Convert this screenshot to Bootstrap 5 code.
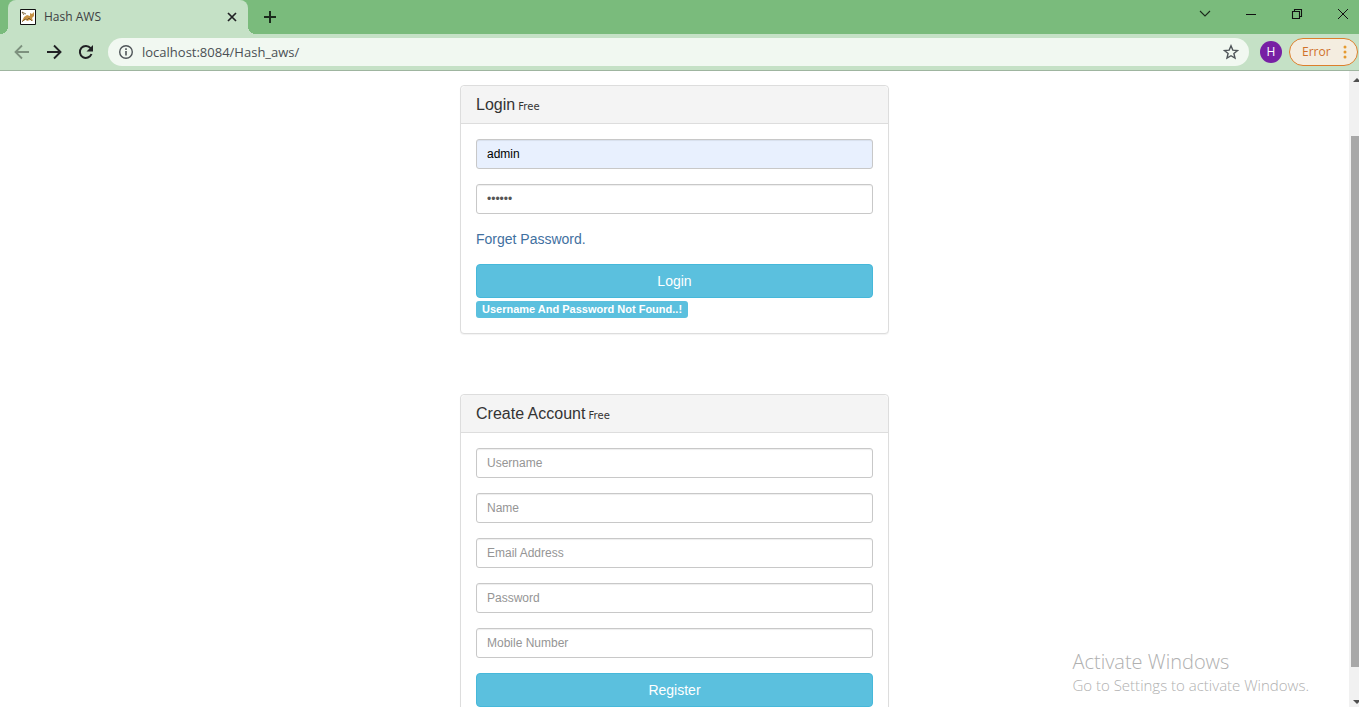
<!DOCTYPE html>
<html lang="en">
<head>
<meta charset="utf-8">
<meta name="viewport" content="width=device-width, initial-scale=1">
<title>Hash AWS</title>
<link href="https://cdn.jsdelivr.net/npm/bootstrap@5.3.0/dist/css/bootstrap.min.css" rel="stylesheet">
<style>
:root { --ui: "Open Sans", "Noto Sans", sans-serif; }
body { font-family: "Liberation Sans", Arial, sans-serif; font-size: 14px; line-height: 20px; color: #333; background: #fff; }
svg { display: block; flex: none; }
button { color: inherit; }
.plain { border: 0; background: none; padding: 0; }
.chrome { font-family: var(--ui); color: #202124; }
.tabstrip { background: #7abb7c; height: 34px; padding-left: 8px; }
.browser-tab { background: #c5e1c6; width: 240px; height: 34px; border-radius: 8px 8px 0 0; padding: 0 10px 0 12px; font-size: 12px; color: #3c4043; position: relative; }
.browser-tab::before, .browser-tab::after { content: ""; position: absolute; bottom: 0; width: 8px; height: 8px; }
.browser-tab::before { left: -8px; background: radial-gradient(circle at 0 0, transparent 8px, #c5e1c6 8px); }
.browser-tab::after { right: -8px; background: radial-gradient(circle at 100% 0, transparent 8px, #c5e1c6 8px); }
.win-controls { gap: 30px; padding-right: 8px; height: 28px; }
.toolbar { background: #c5e1c6; height: 37px; border-bottom: 1px solid #9fb5a0; padding: 0 1px 0 14px; }
.address { background: #f1f8f1; height: 28px; border-radius: 14px; padding: 0 10px; margin: 0 11px 0 14px; }
.address input { font-size: 13px; color: #4a4f54; outline: 0; line-height: 20px; }
.avatar { width: 22px; height: 22px; background: #7720a4; color: #fff; font-size: 12px; }
.error-pill { height: 28px; width: 69px; border: 1px solid #dc7f2b; border-radius: 14px; background: #f4ede0; color: #d0712a; font-size: 12px; margin-left: 7px; padding: 0 10px 0 12px; }
.page-view { min-height: 0; }
.page-content { padding-top: 14px; }
.form-column { max-width: 429px; gap: 60px; }
.panel-box { border: 1px solid #ddd; border-radius: 4px; box-shadow: 0 1px 1px rgba(0,0,0,.05); }
.panel-box .card-header { background: #f4f4f4; border-color: #ddd; padding: 10px 15px; height: 38px; }
.panel-box h1 { font-size: 16px; line-height: 18px; font-weight: 400; }
.panel-box h1 small { font-family: "DejaVu Sans", Verdana, sans-serif; font-size: 10px; }
.panel-box .card-body { padding: 15px; }
.field { height: 30px; padding: 5px 10px; font-size: 12px; line-height: 18px; border: 1px solid #c8c8c8; border-radius: 3px; box-shadow: inset 0 1px 1px rgba(0,0,0,.07); color: #555; margin-bottom: 15px; }
.field::placeholder { color: #959595; }
.autofilled { background: #e8f0fe; color: #000; }
.forgot { color: #41709f; margin-bottom: 15px; }
.btn-sky { --bs-btn-color: #fff; --bs-btn-bg: #5bc0de; --bs-btn-border-color: #46b8da; --bs-btn-hover-color: #fff; --bs-btn-hover-bg: #31b0d5; --bs-btn-hover-border-color: #269abc; font-size: 14px; line-height: 20px; padding: 6px 12px; border-radius: 4px; }
.notice { background: #5bc0de; font-size: 11px; line-height: 11px; padding: 3px 6px; border-radius: 3px; margin-top: 3px; }
.scroll-rail { width: 10px; background: #f1f1f1; padding: 5px 0 1px; }
.scroll-thumb { flex: 531 0 0; background: #a8a8a8; margin: 53px 0 0 2px; }
.scroll-gap { flex: 32 0 0; }
.watermark { right: 50px; bottom: 12px; color: #b0b0b0; font-family: var(--ui); font-weight: 300; pointer-events: none; }
.watermark strong { font-size: 20px; line-height: 26px; font-weight: 300; }
.watermark span { font-size: 15px; line-height: 20px; }
</style>
</head>
<body class="vh-100 overflow-hidden d-flex flex-column">
<header class="chrome flex-shrink-0">
  <div class="tabstrip d-flex">
    <div class="browser-tab d-flex align-items-center">
      <svg width="16" height="16" viewBox="0 0 16 16"><path fill="#fff" stroke="#111" d="M.5.5h15v15H.5z"/><path fill="#c69245" d="M2 12l2-4 3-2 3 1V4l2 1 2-2v4l-2 2 1 3-3-1-3 1-1-2-2 2z"/><path fill="none" stroke="#6f5427" stroke-width=".8" d="M2 13l3-3 2 1 2-2 3 3M4 6l-2-3 4 2"/></svg>
      <span class="ms-2">Hash AWS</span>
      <button class="plain ms-auto" aria-label="Close tab"><svg width="12" height="12" viewBox="0 0 12 12"><path d="M2 2l8 8M10 2l-8 8" stroke="#202124" stroke-width="1.7"/></svg></button>
    </div>
    <button class="plain ms-3" aria-label="New tab"><svg width="12" height="12" viewBox="0 0 12 12"><path d="M6 0v12M0 6h12" stroke="#1b2a1c" stroke-width="2"/></svg></button>
    <div class="win-controls d-flex align-items-center ms-auto">
      <button class="plain" aria-label="Search tabs"><svg width="16" height="12" viewBox="0 0 16 12"><path d="M3 3l5 5 5-5" fill="none" stroke="#1b2a1c" stroke-width="1.1"/></svg></button>
      <button class="plain" aria-label="Minimize"><svg width="16" height="12" viewBox="0 0 16 12"><path d="M3 6.5h10" stroke="#111"/></svg></button>
      <button class="plain" aria-label="Restore"><svg width="16" height="12" viewBox="0 0 16 12"><path d="M3.500 3.500h7v7h-7zM5.500 3v-1.500h7v7H11" fill="none" stroke="#111" stroke-width="1.1"/></svg></button>
      <button class="plain" aria-label="Close"><svg width="16" height="12" viewBox="0 0 16 12"><path d="M3 1l10 10M13 1L3 11" stroke="#111"/></svg></button>
    </div>
  </div>
  <div class="toolbar d-flex align-items-center">
    <div class="d-flex gap-3">
      <button class="plain" aria-label="Back"><svg width="16" height="16" viewBox="0 0 16 16"><path d="M15 8H2M8 1.500L1.500 8 8 14.500" fill="none" stroke="#7d917e" stroke-width="1.800"/></svg></button>
      <button class="plain" aria-label="Forward"><svg width="16" height="16" viewBox="0 0 16 16"><path d="M1 8h13M8 1.500L14.500 8 8 14.500" fill="none" stroke="#202124" stroke-width="1.900"/></svg></button>
      <button class="plain" aria-label="Reload"><svg width="16" height="16" viewBox="0 0 16 16"><path d="M13.500 10A6 6 0 1 1 12.600 4.200" fill="none" stroke="#202124" stroke-width="2"/><path d="M15 1v6.500H8.500z" fill="#202124"/></svg></button>
    </div>
    <div class="address d-flex align-items-center flex-grow-1">
      <svg width="16" height="16" viewBox="0 0 16 16"><circle cx="8" cy="8" r="6.300" fill="none" stroke="#4f5559" stroke-width="1.400"/><path d="M8 7v4.500M8 4.300v1.600" stroke="#4f5559" stroke-width="1.600"/></svg>
      <input class="plain flex-grow-1 ms-2" type="text" aria-label="Address" value="localhost:8084/Hash_aws/">
      <button class="plain" aria-label="Bookmark"><svg width="16" height="16" viewBox="0 0 16 16"><path d="M8 1.800l1.800 4.300 4.700.4-3.600 3 1.100 4.600L8 11.700l-4 2.400 1.100-4.600-3.600-3 4.700-.4z" fill="none" stroke="#4f5559" stroke-width="1.400"/></svg></button>
    </div>
    <button class="plain avatar rounded-circle" aria-label="Profile">H</button>
    <button class="error-pill d-flex align-items-center justify-content-between">Error<svg width="4" height="14" viewBox="0 0 4 14" fill="#e59a2e"><circle cx="2" cy="2" r="1.500"/><circle cx="2" cy="7" r="1.500"/><circle cx="2" cy="12" r="1.500"/></svg></button>
  </div>
</header>
<div class="page-view d-flex flex-grow-1">
  <main class="page-content flex-grow-1 overflow-hidden">
    <div class="form-column d-flex flex-column mx-auto">
      <section class="card panel-box">
        <div class="card-header"><h1 class="m-0">Login<small> Free</small></h1></div>
        <form class="card-body">
          <input class="form-control field autofilled" type="text" aria-label="Username" value="admin">
          <input class="form-control field" type="password" aria-label="Password" value="secret">
          <p class="forgot"><a class="text-reset text-decoration-none" href="#">Forget Password.</a></p>
          <button class="btn btn-sky w-100" type="button">Login</button>
          <span class="badge notice d-table">Username And Password Not Found..!</span>
        </form>
      </section>
      <section class="card panel-box">
        <div class="card-header"><h1 class="m-0">Create Account<small> Free</small></h1></div>
        <form class="card-body">
          <input class="form-control field" type="text" aria-label="Username" placeholder="Username">
          <input class="form-control field" type="text" aria-label="Name" placeholder="Name">
          <input class="form-control field" type="email" aria-label="Email Address" placeholder="Email Address">
          <input class="form-control field" type="password" aria-label="Password" placeholder="Password">
          <input class="form-control field" type="tel" aria-label="Mobile Number" placeholder="Mobile Number">
          <button class="btn btn-sky w-100" type="button">Register</button>
        </form>
      </section>
    </div>
  </main>
  <div class="scroll-rail d-flex flex-column" aria-hidden="true">
    <svg width="10" height="7" viewBox="0 0 10 7"><path d="M4 6l4-4 2 2v2z" fill="#505050"/></svg>
    <div class="scroll-thumb"></div>
    <div class="scroll-gap"></div>
    <svg width="10" height="7" viewBox="0 0 10 7"><path d="M4 1l4 4 2-2V1z" fill="#505050"/></svg>
  </div>
</div>
<aside class="watermark position-absolute d-flex flex-column"><strong>Activate Windows</strong><span>Go to Settings to activate Windows.</span></aside>
<script src="https://cdn.jsdelivr.net/npm/bootstrap@5.3.0/dist/js/bootstrap.bundle.min.js"></script>
</body>
</html>
